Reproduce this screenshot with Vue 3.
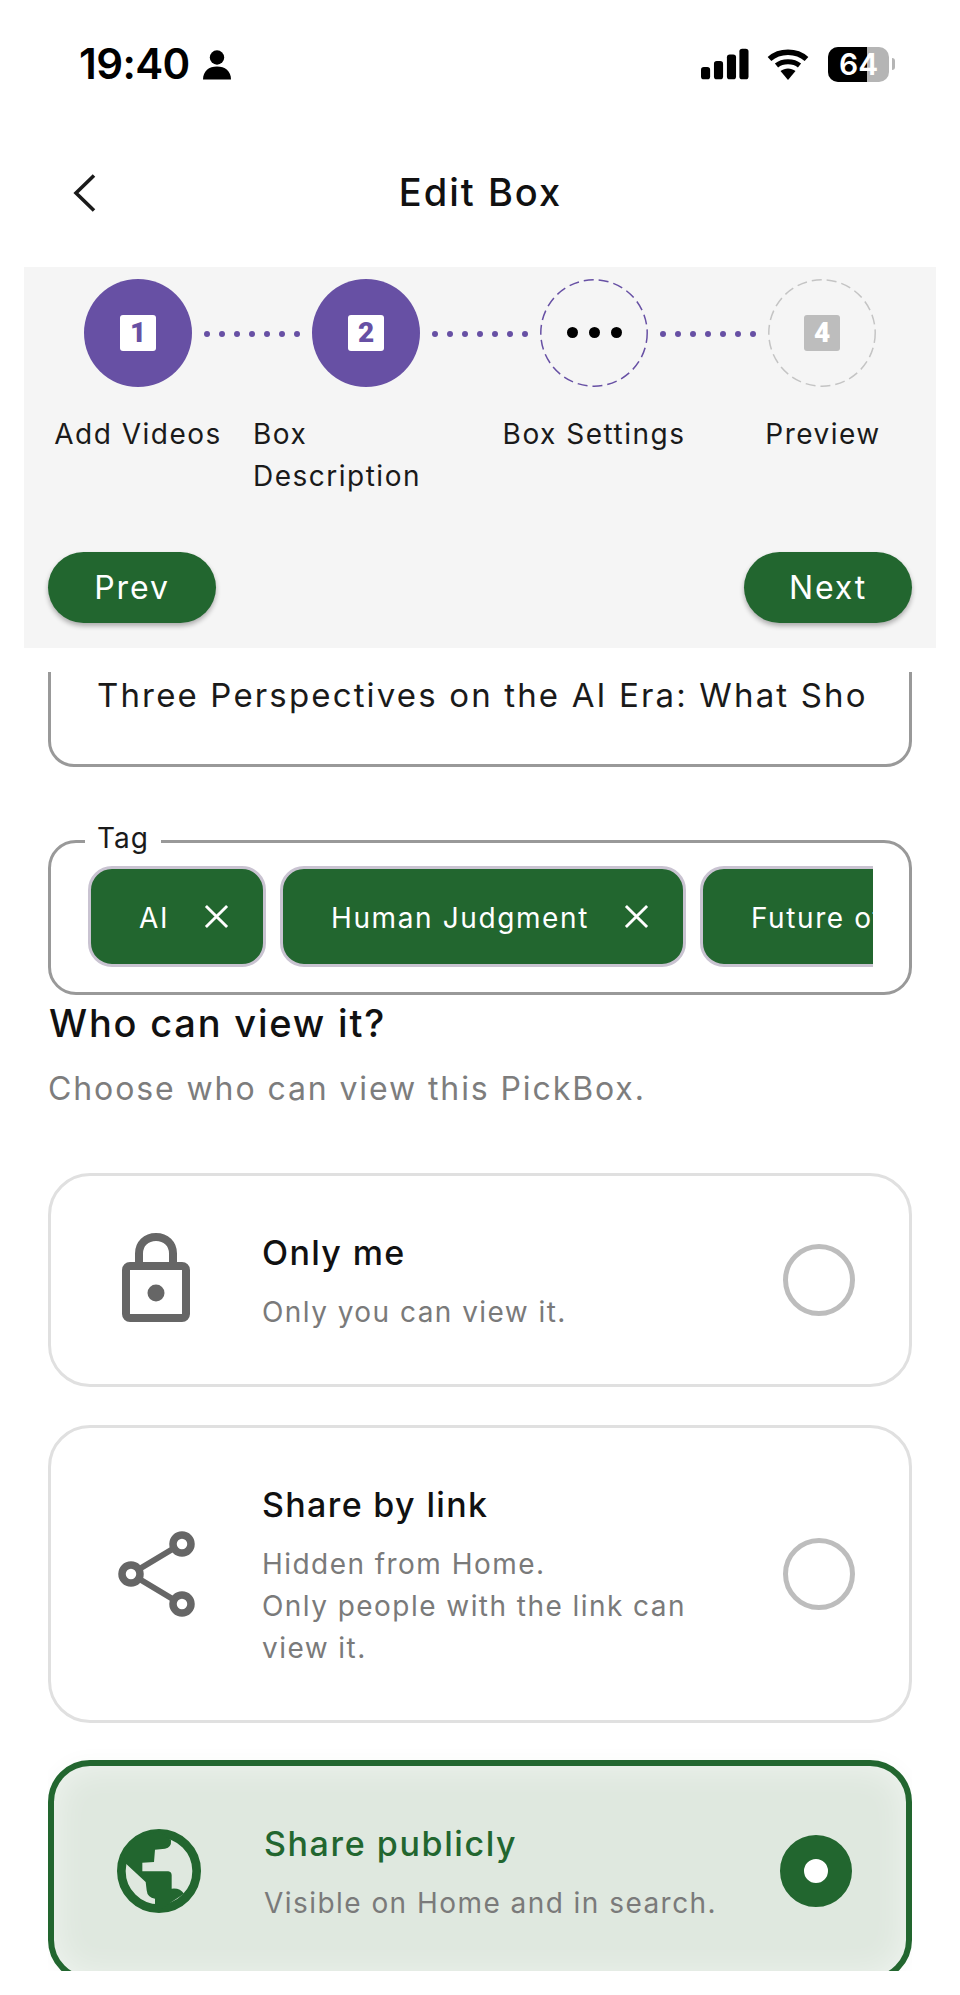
<script setup>
const steps = [
  { n: '1', state: 'done' },
  { n: '2', state: 'done' },
  { state: 'current' },
  { n: '4', state: 'todo' }
]
const labels = ['Add Videos', 'Box Description', 'Box Settings', 'Preview']
const tags = ['AI', 'Human Judgment', 'Future of']
const dots = [1, 2, 3, 4, 5, 6, 7]
</script>

<template>
  <div class="page">
    <div class="status">
      <div class="clock">
        <span>19:40</span>
        <svg class="person" width="30" height="30" viewBox="0 0 30 30">
          <circle cx="15" cy="7.5" r="7.2" fill="#000" />
          <path d="M1 29.5C1 21 7 16.5 15 16.5S29 21 29 29.5Z" fill="#000" />
        </svg>
      </div>
      <div class="sys">
        <svg width="48" height="32" viewBox="0 0 50 32">
          <rect x="0" y="19" width="9.5" height="13" rx="3" fill="#000" />
          <rect x="13.5" y="13" width="9.5" height="19" rx="3" fill="#000" />
          <rect x="27" y="6" width="9.5" height="26" rx="3" fill="#000" />
          <rect x="40" y="0" width="9.5" height="32" rx="3" fill="#000" />
        </svg>
        <svg width="42" height="32" viewBox="0 0 42 32">
          <path d="M2.5 11C12.5 2 29.5 2 39.5 11" fill="none" stroke="#000" stroke-width="5.5" />
          <path d="M9.5 17.5C15.5 12.5 26.5 12.5 32.5 17.5" fill="none" stroke="#000" stroke-width="5" />
          <path d="M13.5 23C18 19.5 24 19.5 28.5 23L21 32Z" fill="#000" />
        </svg>
        <div class="battery">
          <span class="batt-fill"></span>
          <span class="batt-num">64</span>
        </div>
        <span class="nub"></span>
      </div>
    </div>

    <div class="nav">
      <svg class="back" width="24" height="40" viewBox="0 0 24 40">
        <path d="M21 2.5L3 20L21 37.5" fill="none" stroke="#1a1a1a" stroke-width="3.6" />
      </svg>
      <div class="nav-title">Edit Box</div>
    </div>

    <section class="band">
      <div class="track">
        <template v-for="(s, i) in steps" :key="i">
          <div class="circle" :class="s.state">
            <svg v-if="s.state !== 'done'" class="ring" width="108" height="108" viewBox="0 0 108 108">
              <circle cx="54" cy="54" r="53.200" fill="none" stroke-width="1.500" stroke-dasharray="10 5" />
            </svg>
            <span v-if="s.n" class="badge">{{ s.n }}</span>
            <span v-else class="more"><i></i><i></i><i></i></span>
          </div>
          <div v-if="i < 3" class="connector">
            <span v-for="d in dots" :key="d" class="dot"></span>
          </div>
        </template>
      </div>
      <div class="labels">
        <div v-for="(l, i) in labels" :key="l" class="label" :class="'l' + i">{{ l }}</div>
      </div>
      <div class="buttons">
        <button class="pill">Prev</button>
        <button class="pill">Next</button>
      </div>
    </section>

    <main class="scroller">
      <div class="field">
        <div class="field-text">Three Perspectives on the AI Era: What Sho</div>
      </div>

      <div class="tagbox">
        <span class="legend">Tag</span>
        <div class="chips">
          <div v-for="t in tags" :key="t" class="chip">
            <span>{{ t }}</span>
            <svg width="25" height="25" viewBox="0 0 26 26">
              <path d="M2 2L24 24M24 2L2 24" stroke="#fff" stroke-width="3" />
            </svg>
          </div>
        </div>
      </div>

      <h2 class="who">Who can view it?</h2>
      <p class="choose">Choose who can view this PickBox.</p>

      <div class="card c1">
        <div class="icon lock">
          <svg width="68" height="90" viewBox="0 0 68 90">
            <path d="M17 32V20.500C17 11 24 4 34 4S51 11 51 20.500V32" fill="none" stroke="#666" stroke-width="8" />
            <rect x="4" y="33" width="60" height="52" rx="4" fill="none" stroke="#666" stroke-width="8" />
            <circle cx="34" cy="60" r="8.500" fill="#666" />
          </svg>
        </div>
        <div class="copy">
          <div class="title">Only me</div>
          <div class="sub">Only you can view it.</div>
        </div>
        <span class="radio"></span>
      </div>

      <div class="card c2">
        <div class="icon share">
          <svg width="80" height="90" viewBox="0 0 80 90">
            <path d="M16 45L66 15M16 45L66 75" stroke="#666" stroke-width="6" fill="none" />
            <circle cx="16" cy="45" r="9" fill="#fff" stroke="#666" stroke-width="7.500" />
            <circle cx="67" cy="15" r="9" fill="#fff" stroke="#666" stroke-width="7.500" />
            <circle cx="67" cy="75" r="9" fill="#fff" stroke="#666" stroke-width="7.500" />
          </svg>
        </div>
        <div class="copy">
          <div class="title">Share by link</div>
          <div class="sub">Hidden from Home.<br />Only people with the link can<br />view it.</div>
        </div>
        <span class="radio"></span>
      </div>

      <div class="card c3">
        <div class="icon">
          <svg width="84" height="84" viewBox="51 56 252 252">
            <circle cx="177" cy="182" r="113" fill="none" stroke="#22662f" stroke-width="26" />
            <path d="M213 90Q215 112 195 115L165 118L162 155L127 157L127 183L205 183Q215 185 215 195L215 235Q240 232 252 250L177 300L165 283L165 265Q142 262 140 240L137 215L78 160L70 130L110 85L177 62Z" fill="#22662f" />
          </svg>
        </div>
        <div class="copy">
          <div class="title">Share publicly</div>
          <div class="sub">Visible on Home and in search.</div>
        </div>
        <span class="radio on"></span>
      </div>
    </main>
  </div>
</template>

<style>
html, body { margin: 0; background: #fff; }
</style>

<style scoped>
.page {
  width: 960px;
  height: 1995px;
  overflow: hidden;
  background: #fff;
  font-family: Inter, "Liberation Sans", sans-serif;
  color: #111;
}
.status {
  height: 126px;
  box-sizing: border-box;
  padding: 46px 65px 0 79px;
  display: flex;
  justify-content: space-between;
  align-items: flex-start;
}
.clock {
  display: flex;
  align-items: center;
  gap: 14px;
  height: 34px;
  margin-top: 1px;
  font-size: 42px;
  font-weight: 600;
  letter-spacing: -0.6px;
  color: #000;
  line-height: 34px;
}
.person { margin-top: 1px; margin-left: -2px; }
.sys {
  display: flex;
  align-items: center;
  height: 36px;
  gap: 18px;
  position: relative;
}
.battery {
  position: relative;
  width: 61px;
  height: 35px;
  border-radius: 10px;
  overflow: hidden;
  background: #b5b5b5;
  margin-left: 1px;
}
.batt-fill {
  position: absolute;
  left: 0;
  top: 0;
  bottom: 0;
  width: 39px;
  background: #000;
}
.batt-num {
  position: absolute;
  left: 11px;
  top: 0;
  width: 36px;
  font-size: 30px;
  line-height: 35px;
  font-weight: 600;
  color: #fff;
}
.nub {
  width: 3px;
  height: 12px;
  border-radius: 0 6px 6px 0;
  background: #b5b5b5;
  margin-left: -15px;
}
.nav {
  height: 141px;
  position: relative;
  display: flex;
  align-items: center;
  justify-content: center;
}
.back {
  position: absolute;
  left: 73px;
  top: 47px;
}
.nav-title {
  font-size: 38px;
  font-weight: 500;
  letter-spacing: 2px;
  margin-top: -9px;
  margin-left: 1px;
}
.band {
  width: 912px;
  margin-left: 24px;
  height: 381px;
  box-sizing: border-box;
  padding-top: 12px;
  background: #f5f5f5;
}
.track {
  display: flex;
  align-items: center;
  padding-left: 60px;
}
.circle {
  position: relative;
  width: 108px;
  height: 108px;
  box-sizing: border-box;
  border-radius: 50%;
  display: flex;
  align-items: center;
  justify-content: center;
  flex: none;
}
.circle.done { background: #6750a4; }
.ring {
  position: absolute;
  left: 0;
  top: 0;
}
.current .ring { stroke: #6750a4; }
.todo .ring { stroke: #c4c4c4; }
.badge {
  width: 36px;
  height: 36px;
  border-radius: 3px;
  background: #fff;
  color: #6750a4;
  display: flex;
  align-items: center;
  justify-content: center;
  font-family: Roboto, "Liberation Sans", sans-serif;
  font-size: 28px;
  font-weight: 900;
  line-height: 36px;
}
.todo .badge { background: #bdbdbd; color: #fff; }
.more { display: flex; gap: 11px; margin-top: -2px; }
.more i {
  display: block;
  width: 11px;
  height: 11px;
  border-radius: 50%;
  background: #000;
}
.connector {
  width: 120px;
  flex: none;
  display: flex;
  justify-content: center;
  gap: 9px;
  margin-top: 2px;
}
.dot {
  width: 6px;
  height: 6px;
  border-radius: 50%;
  background: #6750a4;
}
.labels {
  display: grid;
  grid-template-columns: repeat(4, 228px);
  margin-top: 26px;
  height: 84px;
  font-size: 28px;
  line-height: 42px;
  letter-spacing: 1.5px;
  color: #1a1a1a;
}
.label { text-align: center; }
.l1 { text-align: left; width: 190px; padding-left: 1px; }
.l2 { padding-left: 0; }
.l3 { padding-left: 2px; }
.buttons {
  display: flex;
  justify-content: space-between;
  padding: 0 24px;
  margin-top: 55px;
}
.pill {
  width: 168px;
  height: 71px;
  border: 0;
  border-radius: 36px;
  background: #22662f;
  color: #fff;
  font-family: inherit;
  font-size: 32px;
  letter-spacing: 1.9px;
  box-shadow: 0 3px 5px rgba(0, 0, 0, 0.3);
  padding: 0;
}
.scroller {
  width: 864px;
  height: 1299px;
  margin: 24px 0 0 48px;
  overflow: hidden;
  box-sizing: border-box;
}
.field {
  margin-top: -40px;
  height: 135px;
  box-sizing: border-box;
  border: 3px solid #999;
  border-radius: 26px;
  padding: 38px 0 0 46px;
}
.field-text {
  width: 768px;
  overflow: hidden;
  white-space: nowrap;
  font-size: 33px;
  line-height: 44px;
  letter-spacing: 2.15px;
  color: #1a1a1a;
}
.tagbox {
  position: relative;
  margin-top: 73px;
  height: 155px;
  box-sizing: border-box;
  border: 3px solid #999;
  border-radius: 28px;
  padding: 23px 36px 0 37px;
}
.legend {
  position: absolute;
  left: 34px;
  top: -25px;
  padding: 0 12px;
  background: #fff;
  font-size: 28px;
  line-height: 40px;
  letter-spacing: 1px;
  color: #1a1a1a;
}
.chips {
  display: flex;
  gap: 14px;
  overflow: hidden;
}
.chip {
  flex: none;
  display: flex;
  align-items: center;
  gap: 35px;
  height: 101px;
  box-sizing: border-box;
  padding: 2px 34px 0 48px;
  border: 3px solid #c9c3d1;
  border-radius: 24px;
  background: #22662f;
  color: #fff;
  font-size: 28px;
  letter-spacing: 1.6px;
}
.chip svg { margin-top: -2px; }
.who {
  margin: 6px 0 0 1px;
  font-size: 38px;
  line-height: 44px;
  font-weight: 500;
  letter-spacing: 1.8px;
  color: #111;
}
.choose {
  margin: 22px 0 0;
  font-size: 32px;
  line-height: 44px;
  letter-spacing: 1.9px;
  color: #7d7d7d;
}
.card {
  display: flex;
  align-items: center;
  box-sizing: border-box;
  border: 3px solid #e0e0e0;
  border-radius: 42px;
  padding-right: 54px;
}
.c1 { margin-top: 62px; height: 214px; }
.c2 { margin-top: 38px; height: 298px; }
.c3 {
  margin-top: 37px;
  height: 222px;
  border: 6px solid #22662f;
  background: #dfe8df;
  box-shadow: inset 0 0 34px rgba(255, 255, 255, 0.55), 0 0 20px rgba(34, 102, 47, 0.03);
}
.icon {
  width: 210px;
  flex: none;
  display: flex;
  align-items: center;
  justify-content: center;
}
.lock { margin-top: -5px; }
.share svg { margin-left: -3px; }
.copy { flex: 1; padding-left: 1px; margin-top: 4px; }
.c3 .copy { padding-left: 0; margin-top: 5px; }
.title {
  font-size: 34px;
  line-height: 42px;
  font-weight: 500;
  letter-spacing: 1.35px;
  color: #111;
}
.c3 .title { color: #22662f; letter-spacing: 1.6px; }
.sub {
  margin-top: 17px;
  font-size: 28px;
  line-height: 42px;
  letter-spacing: 1.45px;
  color: #7a7a7a;
}
.radio {
  flex: none;
  width: 72px;
  height: 72px;
  box-sizing: border-box;
  border-radius: 50%;
  border: 5px solid #bdbdbd;
}
.radio.on {
  border: 24px solid #22662f;
  background: #fff;
}
</style>
